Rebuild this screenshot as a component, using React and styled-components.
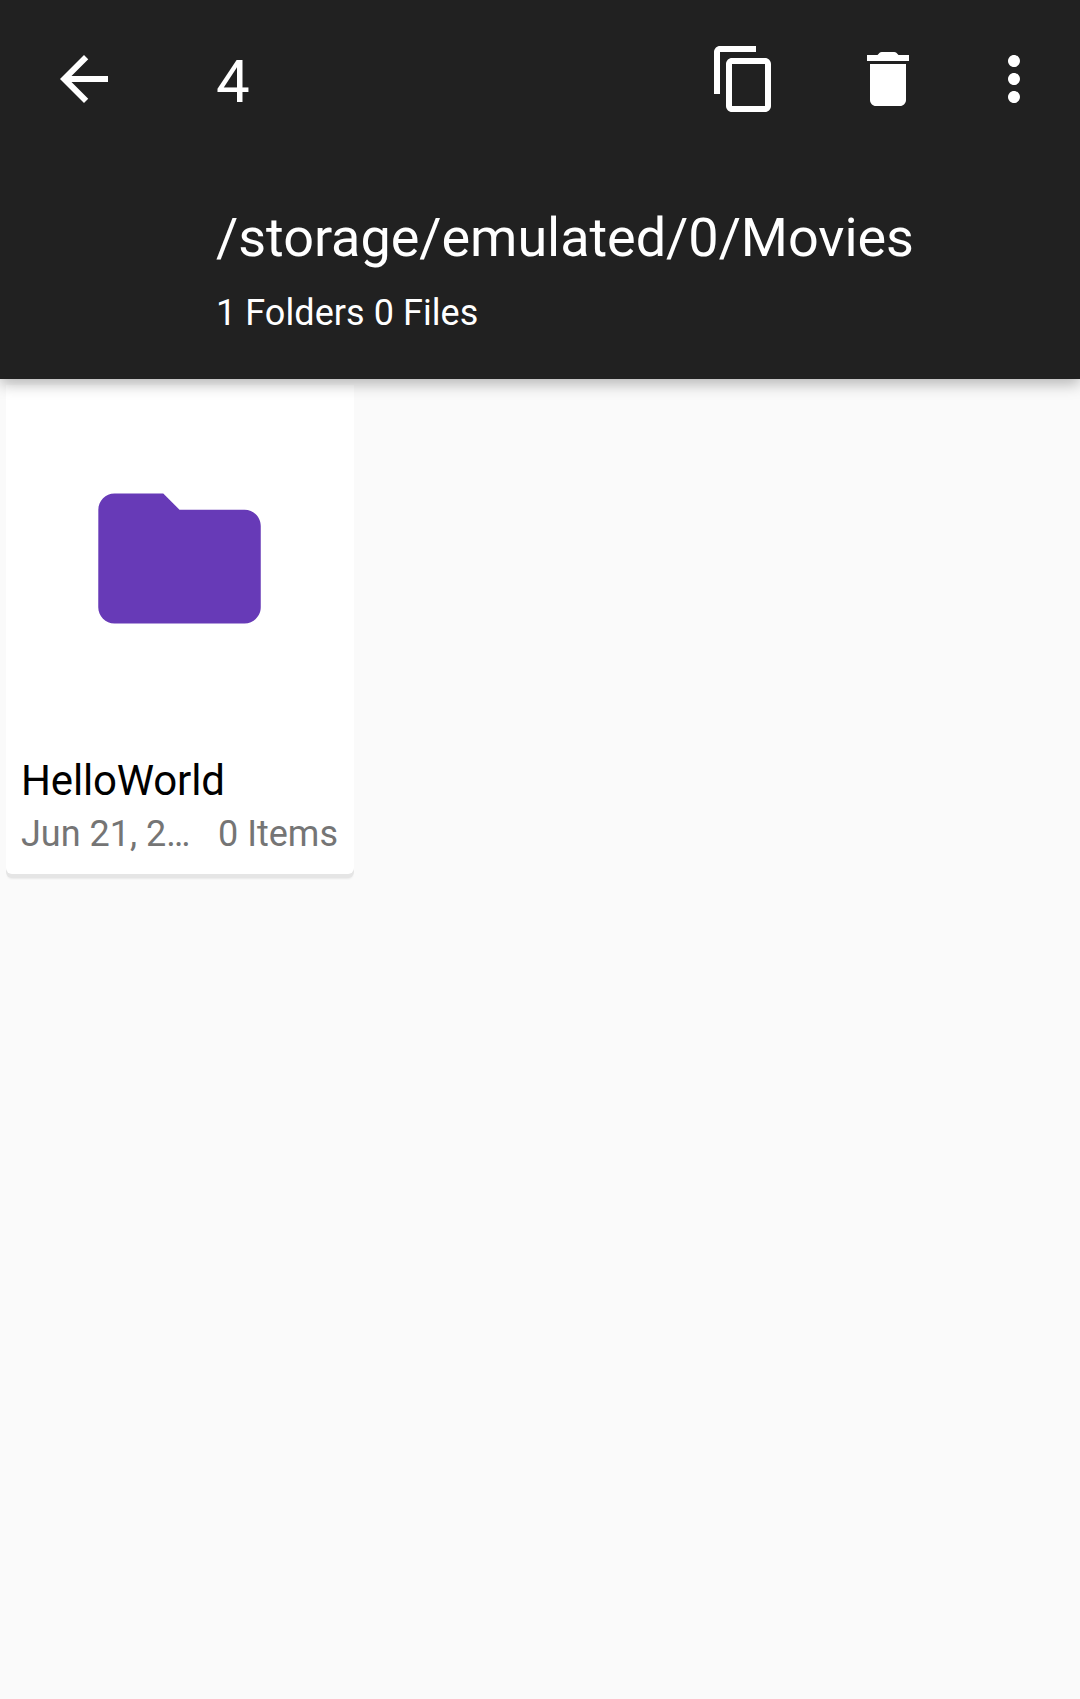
import React from "react";
import styled, { createGlobalStyle } from "styled-components";

const GlobalStyle = createGlobalStyle`
  *, *::before, *::after { box-sizing: border-box; }
  body {
    margin: 0;
    background: #fafafa;
    font-family: Roboto, "Noto Sans", sans-serif;
  }
`;

const Screen = styled.div`
  display: flex;
  flex-direction: column;
  min-height: 1699px;
  overflow: hidden;
  background: #fafafa;
`;

const Header = styled.header`
  position: relative;
  z-index: 1;
  height: 379px;
  background: #212121;
  color: #fff;
  box-shadow: 0 5px 14px rgba(0, 0, 0, 0.28);
`;

const Toolbar = styled.div`
  display: flex;
  align-items: center;
  height: 158px;
  padding: 0 30px 0 48px;
`;

const IconButton = styled.button`
  flex: none;
  width: 72px;
  height: 72px;
  margin: 0 0 0 ${(p) => p.$gap || 0}px;
  padding: 0;
  border: 0;
  background: none;
  color: inherit;
`;

const Glyph = styled.svg`
  display: block;
  width: ${(p) => p.$size}px;
  height: ${(p) => p.$size}px;
  fill: currentColor;
`;

const Count = styled.h1`
  flex: 1;
  margin: 6px 0 0 96px;
  font-size: 60px;
  line-height: 70px;
  font-weight: 400;
`;

const Location = styled.div`
  padding: 48px 48px 0 216px;
`;

const Path = styled.div`
  font-size: 54px;
  line-height: 63px;
  letter-spacing: -0.05px;
  white-space: nowrap;
`;

const Summary = styled.div`
  margin-top: 23px;
  font-size: 36px;
  line-height: 42px;
  letter-spacing: 0.06px;
`;

const Grid = styled.main`
  display: grid;
  grid-template-columns: repeat(3, 348px);
  gap: 12px;
  padding: 6px;
`;

const Card = styled.article`
  height: 489px;
  border-radius: 0 0 6px 6px;
  background: #fff;
  box-shadow: 0 4px 0 #e5e5e5, 0 6px 2px -1px rgba(0, 0, 0, 0.07);
`;

const Thumbnail = styled.div`
  display: flex;
  align-items: center;
  justify-content: center;
  height: 347px;
  padding-right: 1px;
  color: #673ab7;
`;

const Details = styled.div`
  padding: 24px 16px 0 15px;
`;

const Name = styled.div`
  font-size: 42px;
  line-height: 49px;
  letter-spacing: -0.16px;
  color: #000;
`;

const Meta = styled.div`
  display: flex;
  gap: 24px;
  margin-top: 8px;
  font-size: 36px;
  line-height: 42px;
  color: #757575;
`;

const DateText = styled.span`
  flex: 1;
  min-width: 0;
  overflow: hidden;
  text-overflow: ellipsis;
  white-space: nowrap;
`;

const Items = styled.span`
  flex: none;
`;

const shapes = {
  back: "M20 11H7.83l5.59-5.59L12 4l-8 8 8 8 1.41-1.41L7.83 13H20z",
  copy: "M16 1H4c-1.1 0-2 .9-2 2v14h2V3h12V1zm3 4H8c-1.1 0-2 .9-2 2v14c0 1.1.9 2 2 2h11c1.1 0 2-.9 2-2V7c0-1.1-.9-2-2-2zm0 16H8V7h11v14z",
  remove:
    "M6 19c0 1.1.9 2 2 2h8c1.1 0 2-.9 2-2V7H6zM19 4h-3.5l-.71-.71c-.18-.18-.44-.29-.7-.29H9.91c-.26 0-.52.11-.7.29L8.5 4H5v2h14z",
  more: "M12 8c1.1 0 2-.9 2-2s-.9-2-2-2-2 .9-2 2 .9 2 2 2zm0 2c-1.1 0-2 .9-2 2s.9 2 2 2 2-.9 2-2-.9-2-2-2zm0 6c-1.1 0-2 .9-2 2s.9 2 2 2 2-.9 2-2-.9-2-2-2z",
  folder:
    "M10 4H4c-1.1 0-1.99.9-1.99 2L2 18c0 1.1.9 2 2 2h16c1.1 0 2-.9 2-2V8c0-1.1-.9-2-2-2h-8z",
};

const Icon = ({ name, size = 72 }) => (
  <Glyph $size={size} viewBox="0 0 24 24" aria-hidden="true">
    <path d={shapes[name]} />
  </Glyph>
);

const Action = ({ name, label, gap }) => (
  <IconButton aria-label={label} $gap={gap}>
    <Icon name={name} />
  </IconButton>
);

const FolderCard = ({ name, date, items }) => (
  <Card>
    <Thumbnail>
      <Icon name="folder" size={195} />
    </Thumbnail>
    <Details>
      <Name>{name}</Name>
      <Meta>
        <DateText>{date}</DateText>
        <Items>{items}</Items>
      </Meta>
    </Details>
  </Card>
);

export default function App() {
  return (
    <Screen>
      <GlobalStyle />
      <Header>
        <Toolbar>
          <Action name="back" label="Back" />
          <Count>4</Count>
          <Action name="copy" label="Copy" />
          <Action name="remove" label="Delete" gap={72} />
          <Action name="more" label="More options" gap={54} />
        </Toolbar>
        <Location>
          <Path>/storage/emulated/0/Movies</Path>
          <Summary>1 Folders 0 Files</Summary>
        </Location>
      </Header>
      <Grid>
        <FolderCard name="HelloWorld" date="Jun 21, 2…" items="0 Items" />
      </Grid>
    </Screen>
  );
}
